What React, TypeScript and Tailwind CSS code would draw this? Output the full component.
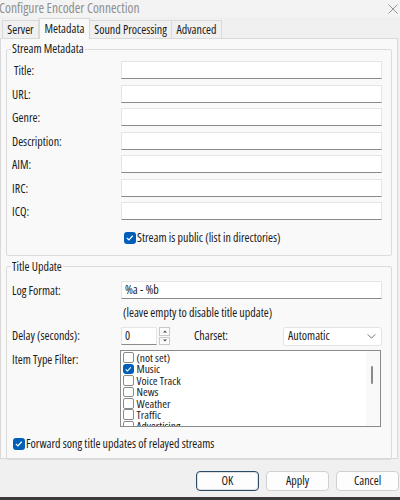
import React from "react";

const Check = ({ checked, size = "w-3 h-3" }: { checked?: boolean; size?: string }) =>
  checked ? (
    <span className={`${size} flex shrink-0 items-center justify-center rounded-[3px] bg-[#005fb8]`}>
      <svg viewBox="0 0 10 10" className="h-[80%] w-[80%]">
        <path d="M2 5.2 L4.1 7.2 L8 2.9" fill="none" stroke="#fff" strokeWidth="1.3" />
      </svg>
    </span>
  ) : (
    <span className={`${size} shrink-0 rounded-[2px] border border-[#8a8a8a] bg-white`} />
  );

const TextField = ({ value = "", className = "" }: { value?: string; className?: string }) => (
  <div
    className={`flex h-[18px] items-center border border-[#e5e5e5] border-b-[#8a8a8a] bg-white px-[3px] text-[12px] text-[#1a1a1a] ${className}`}
  >
    {value}
  </div>
);

const metaRows = ["Title:", "URL:", "Genre:", "Description:", "AIM:", "IRC:", "ICQ:"];
const itemTypes = [
  { label: "(not set)", checked: false },
  { label: "Music", checked: true },
  { label: "Voice Track", checked: false },
  { label: "News", checked: false },
  { label: "Weather", checked: false },
  { label: "Traffic", checked: false },
  { label: "Advertising", checked: false },
];

const Group = ({ title, className = "", children }: { title: string; className?: string; children: React.ReactNode }) => (
  <fieldset className={`mx-[5px] rounded-[2px] border border-[#dcdcdc] ${className}`}>
    <legend className="ml-[4px] px-[1px] text-[12px] leading-[14px] text-[#1a1a1a]">{title}</legend>
    {children}
  </fieldset>
);

export default function App() {
  return (
    <div className="flex h-[500px] w-[400px] flex-col overflow-hidden bg-[#f0f0f0] font-['Open_Sans','Noto_Sans',sans-serif] font-stretch-condensed text-[#1a1a1a]">
      {/* title bar */}
      <div className="flex h-[17px] items-center justify-between bg-[#f3f3f3] pr-[2px]">
        <span className="-ml-[1px] text-[13.5px] leading-none text-[#8f8f8f]">Configure Encoder Connection</span>
        <svg viewBox="0 0 10 10" className="h-[10px] w-[10px]">
          <path d="M0.5 0.5 L9.5 9.5 M9.5 0.5 L0.5 9.5" stroke="#8a8a8a" strokeWidth="0.9" />
        </svg>
      </div>

      {/* tabs */}
      <div className="flex h-[21px] items-end pl-[2px] text-[12px]">
        <div className="flex h-[18px] w-[37px] items-center justify-center border border-b-0 border-[#d9d9d9]">Server</div>
        <div className="relative z-10 -mb-px flex h-[21px] w-[51px] items-center justify-center border border-b-0 border-[#d9d9d9] bg-[#f9f9f9]">
          Metadata
        </div>
        <div className="flex h-[18px] w-[82px] items-center justify-center border border-b-0 border-l-0 border-[#d9d9d9]">Sound Processing</div>
        <div className="flex h-[18px] w-[50px] items-center justify-center border border-b-0 border-l-0 border-[#d9d9d9]">Advanced</div>
      </div>

      {/* panel */}
      <div className="mr-[2px] flex h-[421px] flex-col border border-[#d9d9d9] bg-[#f9f9f9] pt-[3px]">
        <Group title="Stream Metadata" className="pb-[8px]">
          <div className="mt-[5px] flex flex-col">
            {metaRows.map((r, i) => (
              <div key={r} className="flex h-[23.5px] items-start">
                <span className={`w-[114px] shrink-0 pt-[1px] text-[12px] ${i === 0 ? "pl-[7px]" : "pl-[5px]"}`}>{r}</span>
                <TextField className="mr-[9px] flex-1" />
              </div>
            ))}
          </div>
          <div className="mt-[3px] flex items-center gap-[1px] pl-[117px] text-[12px]">
            <Check checked />
            <span>Stream is public (list in directories)</span>
          </div>
        </Group>

        <Group title="Title Update" className="mt-[4px] pb-[6px]">
          <div className="mt-[7px] flex items-start">
            <span className="w-[114px] shrink-0 pl-[5px] pt-[1px] text-[12px]">Log Format:</span>
            <TextField value="%a - %b" className="mr-[9px] flex-1" />
          </div>
          <div className="mt-[5px] pl-[116px] text-[12px] leading-[16px]">(leave empty to disable title update)</div>
          <div className="mt-[6px] flex items-center">
            <span className="w-[114px] shrink-0 pl-[5px] text-[12px]">Delay (seconds):</span>
            <TextField value="0" className="w-[36px]" />
            <div className="ml-[2px] flex flex-col gap-[1px]">
              {["M1 5 L4 2 L7 5", "M1 2 L4 5 L7 2"].map((d) => (
                <div key={d} className="flex h-[8.5px] w-[11px] items-center justify-center border border-[#c8c8c8] bg-[#fbfbfb]">
                  <svg viewBox="0 0 8 7" className="h-[5px] w-[6px]">
                    <path d={d} fill="#555" />
                  </svg>
                </div>
              ))}
            </div>
            <span className="ml-[24px] w-[89px] text-[12px]">Charset:</span>
            <div className="mr-[9px] flex h-[19px] flex-1 items-center justify-between rounded-[3px] border border-[#e3e3e3] bg-white pl-[4px] pr-[5px] text-[12px]">
              Automatic
              <svg viewBox="0 0 10 6" className="h-[5px] w-[9px]">
                <path d="M0.5 0.5 L5 5 L9.5 0.5" fill="none" stroke="#555" strokeWidth="1" />
              </svg>
            </div>
          </div>
          <div className="mt-[4px] flex items-start">
            <span className="w-[113px] shrink-0 pl-[5px] pt-[1px] text-[12px]">Item Type Filter:</span>
            <div className="relative mr-[10px] h-[77px] flex-1 overflow-hidden border border-[#8a8a8a] bg-white pl-[2px] pt-[1.5px]">
              {itemTypes.map((it) => (
                <div key={it.label} className="flex h-[11.4px] items-center gap-[3px] text-[11.5px] leading-[11.4px]">
                  <Check checked={it.checked} size="h-[10.5px] w-[10.5px]" />
                  <span>{it.label}</span>
                </div>
              ))}
              <div className="absolute right-0 top-0 h-full w-[14px] bg-[#f9f9f9]">
                <div className="absolute left-[5px] top-[15px] h-[18px] w-[2px] rounded-full bg-[#8a8a8a]" />
              </div>
            </div>
          </div>
          <div className="mt-[8px] flex items-center gap-[1px] pl-[6px] text-[12px]">
            <Check checked />
            <span>Forward song title updates of relayed streams</span>
          </div>
        </Group>
      </div>

      {/* buttons */}
      <div className="flex flex-1 items-start justify-end gap-[7px] pr-[1px] pt-[12px] text-[12px]">
        <button className="flex h-[20px] w-[63px] items-center justify-center rounded-[4px] border border-[#2a4a66] bg-[#fdfdfd] ring-1 ring-inset ring-[#e0e0e0]">OK</button>
        <button className="flex h-[20px] w-[63px] items-center justify-center rounded-[4px] border border-[#d0d0d0] bg-[#fdfdfd]">Apply</button>
        <button className="flex h-[20px] w-[63px] items-center justify-center rounded-[4px] border border-[#d0d0d0] bg-[#fdfdfd]">Cancel</button>
      </div>
      <div className="h-[3px] bg-[#3a3a3a]" />
    </div>
  );
}
